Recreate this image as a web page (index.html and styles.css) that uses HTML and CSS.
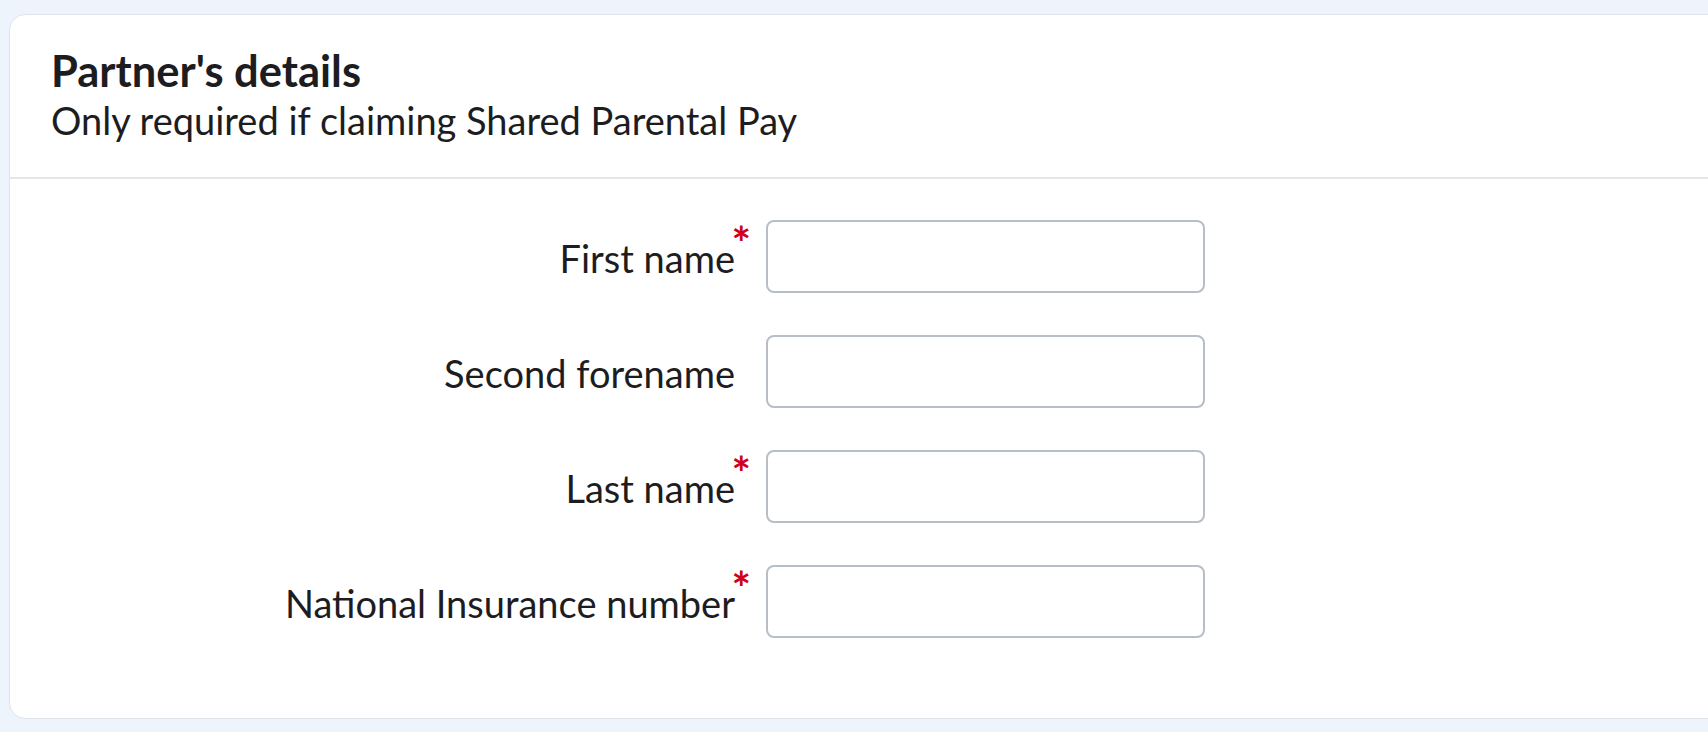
FILE: index.html
```html
<!DOCTYPE html>
<html lang="en">
<head>
<meta charset="utf-8">
<title>Partner's details</title>
<link rel="stylesheet" href="styles.css">
</head>
<body>
<section class="card">
  <header class="card-header">
    <h2 class="card-title">Partner's details</h2>
    <p class="card-subtitle">Only required if claiming Shared Parental Pay</p>
  </header>
  <div class="card-body">
    <form class="form-grid">
      <label class="field-label required" for="first">First name</label>
      <input class="field-input" id="first" type="text">

      <label class="field-label" for="second">Second forename</label>
      <input class="field-input" id="second" type="text">

      <label class="field-label required" for="last">Last name</label>
      <input class="field-input" id="last" type="text">

      <label class="field-label required" for="nino">National Insurance number</label>
      <input class="field-input" id="nino" type="text">
    </form>
  </div>
</section>
</body>
</html>
```
FILE: styles.css
```css
html, body {
  margin: 0;
  padding: 0;
}

body {
  background: #eef4fc;
  font-family: "Lato", "Noto Sans", sans-serif;
  color: #1d1d1f;
  overflow: hidden;
}

.card {
  margin: 14px 0 0 9px;
  width: 1760px;
  height: 705px;
  box-sizing: border-box;
  background: #ffffff;
  border: 1px solid #dfe4ea;
  border-radius: 16px;
}

.card-header {
  padding: 29px 41px 33px;
  border-bottom: 2px solid #e2e7ec;
}

.card-title {
  margin: 0;
  font-size: 43.5px;
  line-height: 52px;
  font-weight: 700;
}

.card-subtitle {
  margin: 0;
  font-size: 38px;
  line-height: 48px;
  font-weight: 400;
}

.card-body {
  padding: 41px 0 0;
}

.form-grid {
  display: grid;
  grid-template-columns: 725px 439px;
  column-gap: 31px;
  row-gap: 42px;
  align-items: center;
}

.field-label {
  position: relative;
  justify-self: end;
  font-size: 38px;
  line-height: 40px;
  padding-top: 2px;
}

.field-label.required::after {
  content: "*";
  position: absolute;
  right: -16px;
  top: -13px;
  color: #d0021b;
  font-weight: 700;
  font-size: 46px;
  line-height: 40px;
}

.field-input {
  height: 73px;
  box-sizing: border-box;
  border: 2px solid #b8bec6;
  border-radius: 8px;
  background: #fff;
  font: inherit;
  font-size: 32px;
  padding: 0 16px;
}
```
